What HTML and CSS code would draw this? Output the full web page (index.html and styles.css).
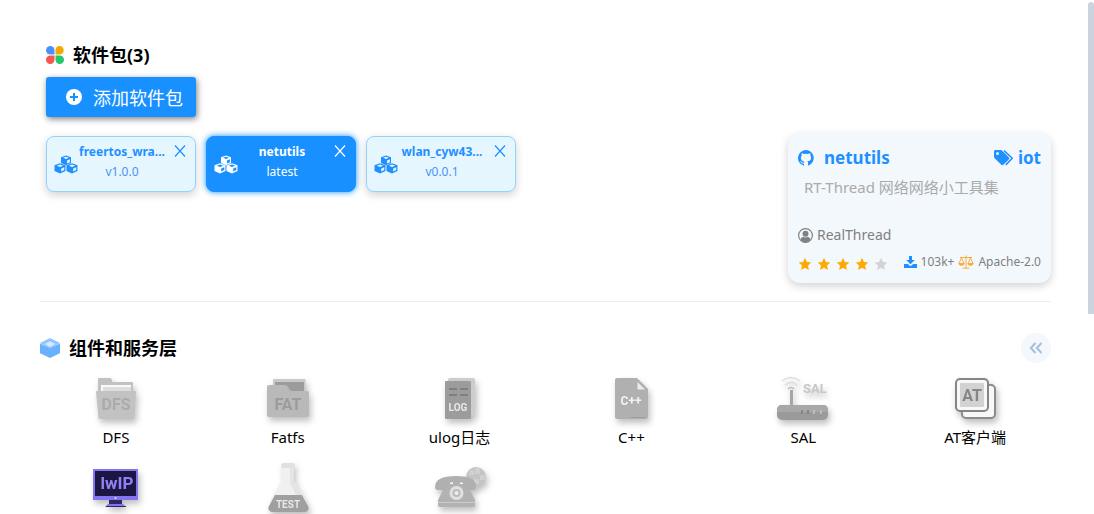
FILE: index.html
```html
<!DOCTYPE html>
<html lang="zh-CN">
<head>
<meta charset="utf-8">
<title>软件包</title>
<link rel="stylesheet" href="styles.css">
</head>
<body>
<svg width="0" height="0" class="defs" aria-hidden="true">
  <symbol id="cubes" viewBox="0 0 24 20">
    <g fill="currentColor">
      <path d="M12 .5l5 1.800v5.700L12 10.200 7 8V2.300z"/>
      <path d="M6 8.200l5.500 2v5.700L6 18.400.5 15.900v-5.700z"/>
      <path d="M18 8.200l5.500 2v5.700L18 18.400l-5.500-2.500v-5.700z"/>
    </g>
    <g class="cube-face">
      <path d="M12 1.700l2.900 1.100L12 4 9.100 2.800z"/><path d="M13 5.400l2.900-1.100v2.900L13 8.500z"/>
      <path d="M6 9.500l3.200 1.200L6 12l-3.200-1.300z"/><path d="M7.200 13.500l3.100-1.300v2.900l-3.100 1.400z"/>
      <path d="M18 9.500l3.200 1.200L18 12l-3.200-1.300z"/><path d="M19.200 13.500l3.100-1.300v2.900l-3.100 1.400z"/>
    </g>
  </symbol>
  <symbol id="close" viewBox="0 0 12 12"><path d="M1 .5l10 11M11 .5L1 11.500" fill="none" stroke="currentColor" stroke-width="1.200"/></symbol>
  <symbol id="star" viewBox="0 0 14 14"><path d="M7 .8l1.900 4.100 4.400.5-3.300 3 .9 4.500L7 10.700l-3.900 2.200.9-4.500-3.300-3 4.400-.5z" fill="currentColor"/></symbol>
</svg>
<div class="scrollbar" aria-hidden="true"></div>
<main class="page">
  <section class="packages">
    <div class="installed">
      <h2 class="title">
        <svg class="title-icon" width="18" height="18" viewBox="0 0 18 18">
          <path d="M4.300 0A4.200 4.200 0 0 1 8.500 4.200V8.500H4.300a4.250 4.250 0 0 1 0-8.500z" fill="#4a90fb"/>
          <path d="M13.500 0a4.250 4.250 0 0 1 0 8.500H9.500V4.200A4.200 4.200 0 0 1 13.500 0z" fill="#f7a600"/>
          <path d="M4.300 9.500H8.500v4.200A4.250 4.250 0 1 1 4.300 9.500z" fill="#f5564f"/>
          <path d="M9.500 9.500h4.200a4.250 4.250 0 1 1-4.200 4.200z" fill="#25c76d"/>
        </svg>
        软件包(3)
      </h2>
      <button class="add" type="button">
        <svg width="16" height="16" viewBox="0 0 16 16"><circle cx="8" cy="8" r="8" fill="#fff"/><path d="M8 4v8M4 8h8" stroke="#1890ff" stroke-width="2"/></svg>
        添加软件包
      </button>
      <ul class="chips">
        <li class="chip">
          <svg class="cubes" width="24" height="20"><use href="#cubes"/></svg>
          <div class="chip-text"><b>freertos_wra...</b><span>v1.0.0</span></div>
          <button class="close" type="button" aria-label="移除"><svg width="12" height="12"><use href="#close"/></svg></button>
        </li>
        <li class="chip active">
          <svg class="cubes" width="24" height="20"><use href="#cubes"/></svg>
          <div class="chip-text"><b>netutils</b><span>latest</span></div>
          <button class="close" type="button" aria-label="移除"><svg width="12" height="12"><use href="#close"/></svg></button>
        </li>
        <li class="chip">
          <svg class="cubes" width="24" height="20"><use href="#cubes"/></svg>
          <div class="chip-text"><b>wlan_cyw43...</b><span>v0.0.1</span></div>
          <button class="close" type="button" aria-label="移除"><svg width="12" height="12"><use href="#close"/></svg></button>
        </li>
      </ul>
    </div>
    <article class="detail">
      <header class="detail-head">
        <a class="name" href="#">
          <svg width="16" height="16" viewBox="0 0 16 16"><path fill="currentColor" d="M8 0a8 8 0 0 0-2.500 15.600c.4.100.5-.2.500-.4v-1.500c-2.200.5-2.700-.9-2.700-.9-.4-.9-.9-1.200-.9-1.200-.7-.5.100-.5.100-.5.800.1 1.200.8 1.200.8.700 1.200 1.900.9 2.300.7.100-.5.300-.9.500-1.100-1.800-.2-3.600-.9-3.600-4 0-.9.300-1.600.8-2.100-.1-.2-.4-1 .1-2.100 0 0 .7-.2 2.200.8a7.600 7.600 0 0 1 4 0c1.500-1 2.200-.8 2.200-.8.400 1.100.200 1.900.1 2.100.5.600.8 1.300.8 2.100 0 3.100-1.900 3.700-3.700 3.900.3.300.6.800.6 1.500v2.200c0 .2.100.5.500.4A8 8 0 0 0 8 0z"/></svg>
          netutils
        </a>
        <a class="tag" href="#">
          <svg width="20" height="16" viewBox="0 0 20 16"><path fill="currentColor" fill-rule="evenodd" d="M0 1.500v5.300c0 .4.200.8.400 1.100l6.900 6.900c.6.600 1.500.6 2.100 0l5.400-5.400c.6-.6.600-1.500 0-2.100L7.900.4C7.600.2 7.200 0 6.800 0H1.500C.7 0 0 .7 0 1.500zm3.500.5a1.500 1.500 0 1 1 0 3 1.500 1.500 0 0 1 0-3z"/><path d="M10 .6l8.300 7.700-6.500 6.600" fill="none" stroke="currentColor" stroke-width="1.500" stroke-linejoin="round"/></svg>
          iot
        </a>
      </header>
      <p class="desc">RT-Thread 网络网络小工具集</p>
      <div class="author">
        <svg width="15" height="15" viewBox="0 0 15 15"><circle cx="7.500" cy="7.500" r="6.900" fill="none" stroke="currentColor" stroke-width="1.200"/><circle cx="7.500" cy="5.800" r="3" fill="currentColor"/><path fill="currentColor" d="M2.500 11.500c.5-2 2-2.500 3-2.700a4 4 0 0 0 4 0c1 .2 2.500.7 3 2.700a6 6 0 0 1-10 0z"/></svg>
        RealThread
      </div>
      <footer class="meta">
        <div class="stars" role="img" aria-label="4 / 5">
          <svg width="14" height="14"><use href="#star"/></svg>
          <svg width="14" height="14"><use href="#star"/></svg>
          <svg width="14" height="14"><use href="#star"/></svg>
          <svg width="14" height="14"><use href="#star"/></svg>
          <svg class="off" width="14" height="14"><use href="#star"/></svg>
        </div>
        <div class="facts">
          <svg width="13" height="12" viewBox="0 0 13 12"><path fill="#1e90ff" d="M5 0h3v4h2.800L6.500 8.300 2.200 4H5zM0 8h3.700l2.800 2.200L9.300 8H13v4H0z"/></svg>
          <span>103k+</span>
          <svg width="16" height="14" viewBox="0 0 16 14"><g fill="none" stroke="#fbaa3c"><path d="M2 2.500h12M8 .5v12.500M4.500 13.200h7M3.500 3L.9 8.500h5.200zM12.500 3L9.900 8.500h5.200z"/><path d="M.8 9c.7 1.700 4.700 1.700 5.400 0zM9.800 9c.7 1.700 4.700 1.700 5.400 0z" fill="#fbaa3c"/></g></svg>
          <span>Apache-2.0</span>
        </div>
      </footer>
    </article>
  </section>

  <section class="services">
    <div class="services-head">
      <h2 class="title">
        <svg width="20" height="20" viewBox="0 0 20 20"><path fill="#69b1ff" d="M0 5.500L10 10l10-4.500v9.800L10 20 0 15.300z"/><path fill="#8fc6ff" d="M10 0l10 5-10 5.500L0 5z"/><path fill="#d4e9ff" d="M10 3.200l5.300 2.900L10 9 4.700 6.100z"/></svg>
        组件和服务层
      </h2>
      <button class="fold" type="button" aria-label="收起">
        <svg width="14" height="12" viewBox="0 0 14 12"><path d="M6.500 1L1.800 6l4.700 5M12.500 1L7.800 6l4.700 5" fill="none" stroke="#a3c1dc" stroke-width="2"/></svg>
      </button>
    </div>
    <ul class="grid">
      <li class="item">
        <svg class="pic" width="60" height="52" viewBox="0 0 60 52"><path fill="#c2c2c2" d="M12 7q0-1 1-1h11q1 0 1.500 1l1 3H46q1 0 1 1v10H12z"/><path fill="#fafafa" d="M15 13h30v8H15z"/><path fill="#ddd" d="M17 15h28v6H17z"/><path fill="#c2c2c2" d="M10 20q0-1 1-1h38q1 0 1 1l-1.500 26q0 1-1 1h-34q-1 0-1-1z"/><text x="30" y="38" text-anchor="middle" font-size="16" fill="#ababab" class="bold">DFS</text></svg>
        <span>DFS</span>
      </li>
      <li class="item">
        <svg class="pic" width="60" height="52" viewBox="0 0 60 52"><path fill="#c9c9c9" d="M15 7h32.500v18H15z"/><path fill="#9c9c9c" d="M17 10h29v18H17z"/><path fill="#b9b9b9" d="M9 15q0-2 2-2h16q2 0 3 2l1 2q1 2 3 2h15q2 0 2 2v22q0 2-2 2H11q-2 0-2-2z"/><text x="30" y="38" text-anchor="middle" font-size="16" fill="#9c9c9c" class="bold">FAT</text></svg>
        <span>Fatfs</span>
      </li>
      <li class="item">
        <svg class="pic" width="60" height="52" viewBox="0 0 60 52"><rect x="18" y="6" width="27" height="38" rx="2" fill="#cdcdcd"/><rect x="15" y="9" width="26" height="38" rx="1" fill="#9c9c9c"/><path d="M19 17h8M30 17h8M19 23h8M30 23h8" stroke="#808080" stroke-width="2"/><text x="28" y="39" text-anchor="middle" font-size="10" fill="#e8e8e8" class="bold">LOG</text></svg>
        <span>ulog日志</span>
      </li>
      <li class="item">
        <svg class="pic" width="60" height="52" viewBox="0 0 60 52"><path fill="#b0b0b0" d="M14 8q0-2 2-2h20l11 11v28q0 2-2 2H16q-2 0-2-2z"/><path fill="#ececec" d="M36.500 10v7.500H44z"/><text x="30" y="33" text-anchor="middle" font-size="12" fill="#f3f3f3" class="bold">C++</text><path stroke="#9c9c9c" d="M30 45.500h14"/></svg>
        <span>C++</span>
      </li>
      <li class="item">
        <svg class="pic" width="60" height="52" viewBox="0 0 60 52"><g fill="none" stroke="#ddd" stroke-width="1.500"><path d="M9 9q9-7 18 0M12 13q6.500-5 12 0"/><path d="M15 17q3-3 6 0" stroke="#bbb"/></g><path d="M17 18h3v16h-3z" fill="#a5a5a5"/><rect x="4" y="33" width="51" height="15" rx="5" fill="#9a9a9a"/><path d="M4 38q0-5 5-5h41q5 0 5 5v2H4z" fill="#a8a8a8"/><path d="M29 38v4M35 38v4" stroke="#858585" stroke-width="2"/><path d="M41 38v4M48 38v4" stroke="#bdbdbd" stroke-width="2"/><text x="42" y="21" text-anchor="middle" font-size="13" fill="#c6c6c6" class="bold">SAL</text></svg>
        <span>SAL</span>
      </li>
      <li class="item">
        <svg class="pic" width="60" height="52" viewBox="0 0 60 52"><rect x="17" y="13" width="33" height="33" rx="4" fill="#f8f8f8" stroke="#8c8c8c" stroke-width="2"/><rect x="11" y="7" width="32" height="32" rx="4" fill="#f8f8f8" stroke="#858585" stroke-width="2"/><rect x="15" y="11" width="24" height="24" rx="1" fill="#d2d2d2"/><text x="27" y="29" text-anchor="middle" font-size="16" fill="#858585" class="bold">AT</text></svg>
        <span>AT客户端</span>
      </li>
      <li class="item">
        <svg class="pic" width="60" height="52" viewBox="0 0 60 52"><path fill="#8374f2" d="M7 7h45v31H7z"/><path fill="#1b1642" d="M9 9h41v25H9z"/><text x="31" y="27" text-anchor="middle" font-size="17" fill="#8f82f5" class="bold">lwIP</text><circle cx="29.500" cy="36" r="1" fill="#f3e0ad"/><path fill="#2d2864" d="M23 38h13v4H23z"/><path fill="#8374f2" d="M22 42h15l3 3H19z"/><path fill="#2d2864" d="M20 44h20v1H20z"/></svg>
      </li>
      <li class="item">
        <svg class="pic" width="60" height="52" viewBox="0 0 60 52"><path fill="#f0f0f0" d="M24 5h12v14l12 20H12l12-20z"/><path fill="#e4e4e4" d="M32 6h4v13l8 14h-6l-6-12z"/><rect x="23" y="1" width="14" height="5" rx="2" fill="#e0e0e0"/><path fill="#a0a0a0" d="M17 33h27l6 11q2 5-3 6H14q-5-1-3-6z"/><text x="30" y="46" text-anchor="middle" font-size="10" fill="#e7e7e7" class="bold">TEST</text></svg>
      </li>
      <li class="item">
        <svg class="pic" width="60" height="52" viewBox="0 0 60 52"><circle cx="46" cy="15" r="10" fill="#c4c4c4"/><path fill="#d0d0d0" d="M40 8h4v5h-5zM45 6h5v6h-5zM50 13h5v5h-5zM44 17h5v5h-5z"/><path fill="#b2b2b2" d="M14 26l3-7h18l4 7 6 12v5q0 2-2 2H10q-2 0-2-2v-5z"/><path fill="#f4f4f4" d="M16 18h20v6H16z"/><path fill="#b2b2b2" d="M18 19h2v3h3v-3h7v3h3v-3h2v7H18z"/><path fill="#b0b0b0" d="M5 25q0-11 21-11t20 11q0 3-3 3h-6q-3 0-3-4v-3q-8-2-16 0v3q0 4-3 4H8q-3 0-3-3z"/><circle cx="26.500" cy="31" r="7" fill="#e1e1e1"/><circle cx="26.500" cy="31" r="4" fill="#bbb"/><circle cx="26.500" cy="31" r="2" fill="#eee"/><path stroke="#ccc" d="M8 40.500h37"/></svg>
      </li>
    </ul>
  </section>
</main>
</body>
</html>
```
FILE: styles.css
```css
* { box-sizing: border-box; }
html, body { height: 100%; }
body {
  margin: 0;
  overflow: hidden;
  background: #fff;
  color: #000;
  font-family: "Segoe UI", "Noto Sans", "Noto Sans CJK SC", sans-serif;
  font-size: 15px;
}
ul { list-style: none; margin: 0; padding: 0; }
a { color: inherit; text-decoration: none; }
button { font: inherit; border: 0; cursor: pointer; }
svg { flex: none; }
.defs { position: absolute; }
.scrollbar {
  position: fixed;
  top: 2px;
  right: 0;
  width: 6px;
  height: 312px;
  border-radius: 3px 3px 0 0;
  background: #cbd3df;
}
.page { padding: 40px 43px 0 40px; }
.packages {
  display: flex;
  justify-content: space-between;
  align-items: flex-end;
  padding-bottom: 18px;
  border-bottom: 1px solid #ebeef2;
}
.installed { align-self: flex-start; padding-left: 6px; }
.title {
  display: flex;
  align-items: center;
  gap: 9px;
  margin: 0;
  font-size: 18px;
  line-height: 30px;
  font-weight: 700;
}
.add {
  display: flex;
  align-items: center;
  gap: 11px;
  width: 150px;
  height: 40px;
  margin: 7px 0 19px;
  padding: 0 0 0 20px;
  border-radius: 3px;
  background: #1890ff;
  color: #fff;
  font-size: 18px;
  white-space: nowrap;
  box-shadow: 1px 2px 6px rgba(0, 0, 0, .5);
}
.chips { display: flex; gap: 10px; }
.chip {
  display: flex;
  align-items: flex-start;
  width: 150px;
  height: 56px;
  padding: 5px 9px 0 7px;
  border: 1px solid #91d5ff;
  border-radius: 8px;
  background: #e6f6ff;
  color: #1e90ff;
  box-shadow: 0 3px 8px rgba(0, 0, 0, .18);
}
.cubes { margin-top: 13px; }
.cube-face { fill: var(--face, #e6f6ff); }
.chip-text {
  flex: 1;
  min-width: 0;
  display: flex;
  flex-direction: column;
  align-items: center;
  font-size: 12px;
  line-height: 20px;
  white-space: nowrap;
}
.chip-text span { color: #4a93f5; }
.close {
  display: flex;
  margin: 3px 0 0 8px;
  padding: 0;
  background: none;
  color: inherit;
}
.chip.active {
  --face: #1890ff;
  border-color: #1890ff;
  background: #1890ff;
  color: #fff;
  box-shadow: 0 0 6px #1890ff;
}
.active .chip-text span { color: #fff; }
.detail {
  width: 263px;
  height: 150px;
  margin-top: 93px;
  padding: 10px;
  border-radius: 12px;
  background: #f3f8fd;
  box-shadow: 0 3px 8px rgba(0, 0, 0, .18);
}
.detail-head {
  display: flex;
  justify-content: space-between;
  color: #1e90ff;
  font-size: 17px;
  font-weight: 700;
  line-height: 30px;
}
.name, .tag { display: flex; align-items: center; }
.name { gap: 10px; }
.tag { gap: 4px; }
.desc { margin: 1px 6px 0; color: #aaa; font-size: 15px; line-height: 26px; white-space: nowrap; }
.author {
  display: flex;
  align-items: center;
  gap: 4px;
  margin-top: 22px;
  color: #808080;
  font-size: 14px;
  line-height: 26px;
}
.meta { display: flex; justify-content: space-between; align-items: center; line-height: 28px; }
.stars { display: flex; gap: 5px; padding-top: 4px; color: #ffaa00; }
.stars .off { color: #d3d3d3; }
.facts { display: flex; align-items: center; gap: 4px; color: #808080; font-size: 12px; white-space: nowrap; }
.services { padding-top: 31px; }
.services-head { display: flex; align-items: center; justify-content: space-between; }
.fold {
  display: grid;
  place-items: center;
  width: 30px;
  height: 30px;
  padding: 0;
  border-radius: 50%;
  background: #f4f7fb;
}
.grid {
  display: grid;
  grid-template-columns: repeat(6, 1fr);
  margin: 9px -10px 0;
}
.item {
  display: flex;
  flex-direction: column;
  align-items: center;
  height: 90px;
  font-size: 15px;
  line-height: 26px;
}
.pic { filter: drop-shadow(2px 4px 3px rgba(0, 0, 0, .25)); }
.bold { font-family: Roboto, "Liberation Sans", sans-serif; font-weight: 700; }
```
